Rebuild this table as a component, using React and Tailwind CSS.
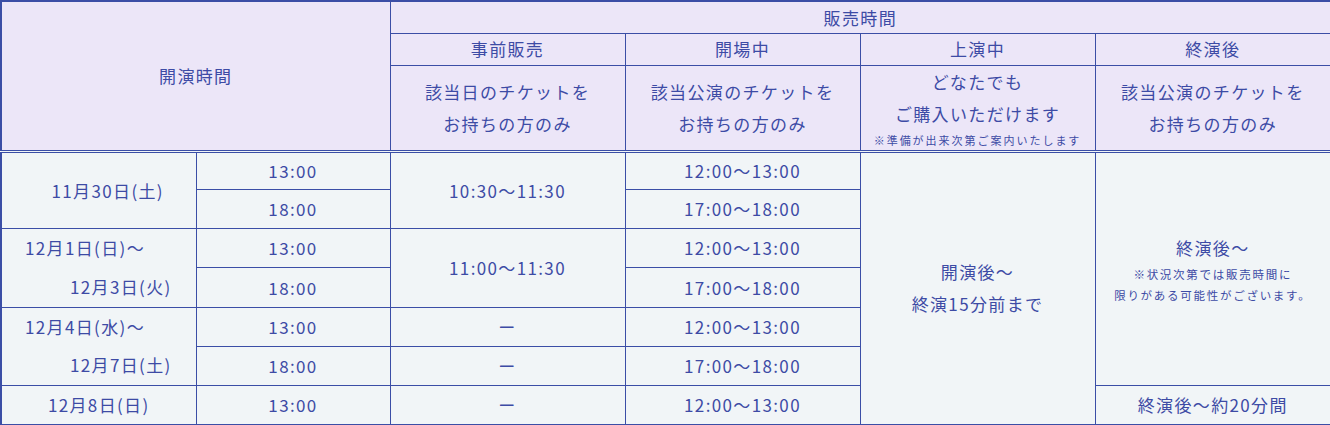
const td = 'border border-[#3b4ea6] text-center align-middle p-0';
const head = td + ' bg-[#ece6f8] font-normal';
const body = td + ' bg-[#f1f5f7]';
const hb = ' border-b-[3px] border-double';

function Note({ children }) {
  return <div className="text-[11.5px] leading-[21px] tracking-[0.15em]">{children}</div>;
}

export default function App() {
  return (
    <div className="w-[1330px] h-[425px] bg-white">
      <table
        className="w-[1330px] table-fixed border-collapse border-2 border-[#3b4ea6] text-[17px] tracking-[0.08em] text-[#3d4ba5]"
        style={{ fontFamily: '"Noto Sans CJK JP", "Noto Sans", sans-serif' }}
      >
        <colgroup>
          <col className="w-[195px]" />
          <col className="w-[194px]" />
          <col className="w-[235px]" />
          <col className="w-[235px]" />
          <col className="w-[235px]" />
          <col className="w-[236px]" />
        </colgroup>
        <thead>
          <tr className="h-[32px]">
            <th colSpan={2} rowSpan={3} className={head + hb}>開演時間</th>
            <th colSpan={4} className={head}>販売時間</th>
          </tr>
          <tr className="h-[32px]">
            <th className={head}>事前販売</th>
            <th className={head}>開場中</th>
            <th className={head}>上演中</th>
            <th className={head}>終演後</th>
          </tr>
          <tr className="h-[86px]">
            <th className={head + hb + ' leading-[32px]'}>該当日のチケットを<br />お持ちの方のみ</th>
            <th className={head + hb + ' leading-[32px]'}>該当公演のチケットを<br />お持ちの方のみ</th>
            <th className={head + hb + ' leading-[32px]'}>
              <div>どなたでも</div>
              <div>ご購入いただけます</div>
              <div className="text-[11px] leading-[20px] tracking-[0.18em]">※準備が出来次第ご案内いたします</div>
            </th>
            <th className={head + hb + ' leading-[32px]'}>該当公演のチケットを<br />お持ちの方のみ</th>
          </tr>
        </thead>
        <tbody>
          <tr className="h-[38.8px]">
            <td rowSpan={2} className={body + ' pl-[18px]'}>11月30日(土)</td>
            <td className={body}>13:00</td>
            <td rowSpan={2} className={body}>10:30〜11:30</td>
            <td className={body}>12:00〜13:00</td>
            <td rowSpan={7} className={body + ' leading-[32px]'}>
              <div>開演後〜</div>
              <div>終演15分前まで</div>
            </td>
            <td rowSpan={6} className={body}>
              <div className="leading-[32px]">終演後〜</div>
              <Note>※状況次第では販売時間に</Note>
              <Note>限りがある可能性がございます。</Note>
            </td>
          </tr>
          <tr className="h-[38.8px]">
            <td className={body}>18:00</td>
            <td className={body}>17:00〜18:00</td>
          </tr>
          <tr className="h-[38.8px]">
            <td rowSpan={2} className={body + ' text-left'}>
              <div className="flex flex-col">
                <div className="h-[38.8px] leading-[38.8px] pl-[23px]">12月1日(日)〜</div>
                <div className="h-[38.8px] leading-[38.8px] pl-[68px]">12月3日(火)</div>
              </div>
            </td>
            <td className={body}>13:00</td>
            <td rowSpan={2} className={body}>11:00〜11:30</td>
            <td className={body}>12:00〜13:00</td>
          </tr>
          <tr className="h-[38.8px]">
            <td className={body}>18:00</td>
            <td className={body}>17:00〜18:00</td>
          </tr>
          <tr className="h-[38.8px]">
            <td rowSpan={2} className={body + ' text-left'}>
              <div className="flex flex-col">
                <div className="h-[38.8px] leading-[38.8px] pl-[23px]">12月4日(水)〜</div>
                <div className="h-[38.8px] leading-[38.8px] pl-[68px]">12月7日(土)</div>
              </div>
            </td>
            <td className={body}>13:00</td>
            <td className={body}>ー</td>
            <td className={body}>12:00〜13:00</td>
          </tr>
          <tr className="h-[38.8px]">
            <td className={body}>18:00</td>
            <td className={body}>ー</td>
            <td className={body}>17:00〜18:00</td>
          </tr>
          <tr className="h-[38.8px]">
            <td className={body}>12月8日(日)</td>
            <td className={body}>13:00</td>
            <td className={body}>ー</td>
            <td className={body}>12:00〜13:00</td>
            <td className={body}>終演後〜約20分間</td>
          </tr>
        </tbody>
      </table>
    </div>
  );
}
